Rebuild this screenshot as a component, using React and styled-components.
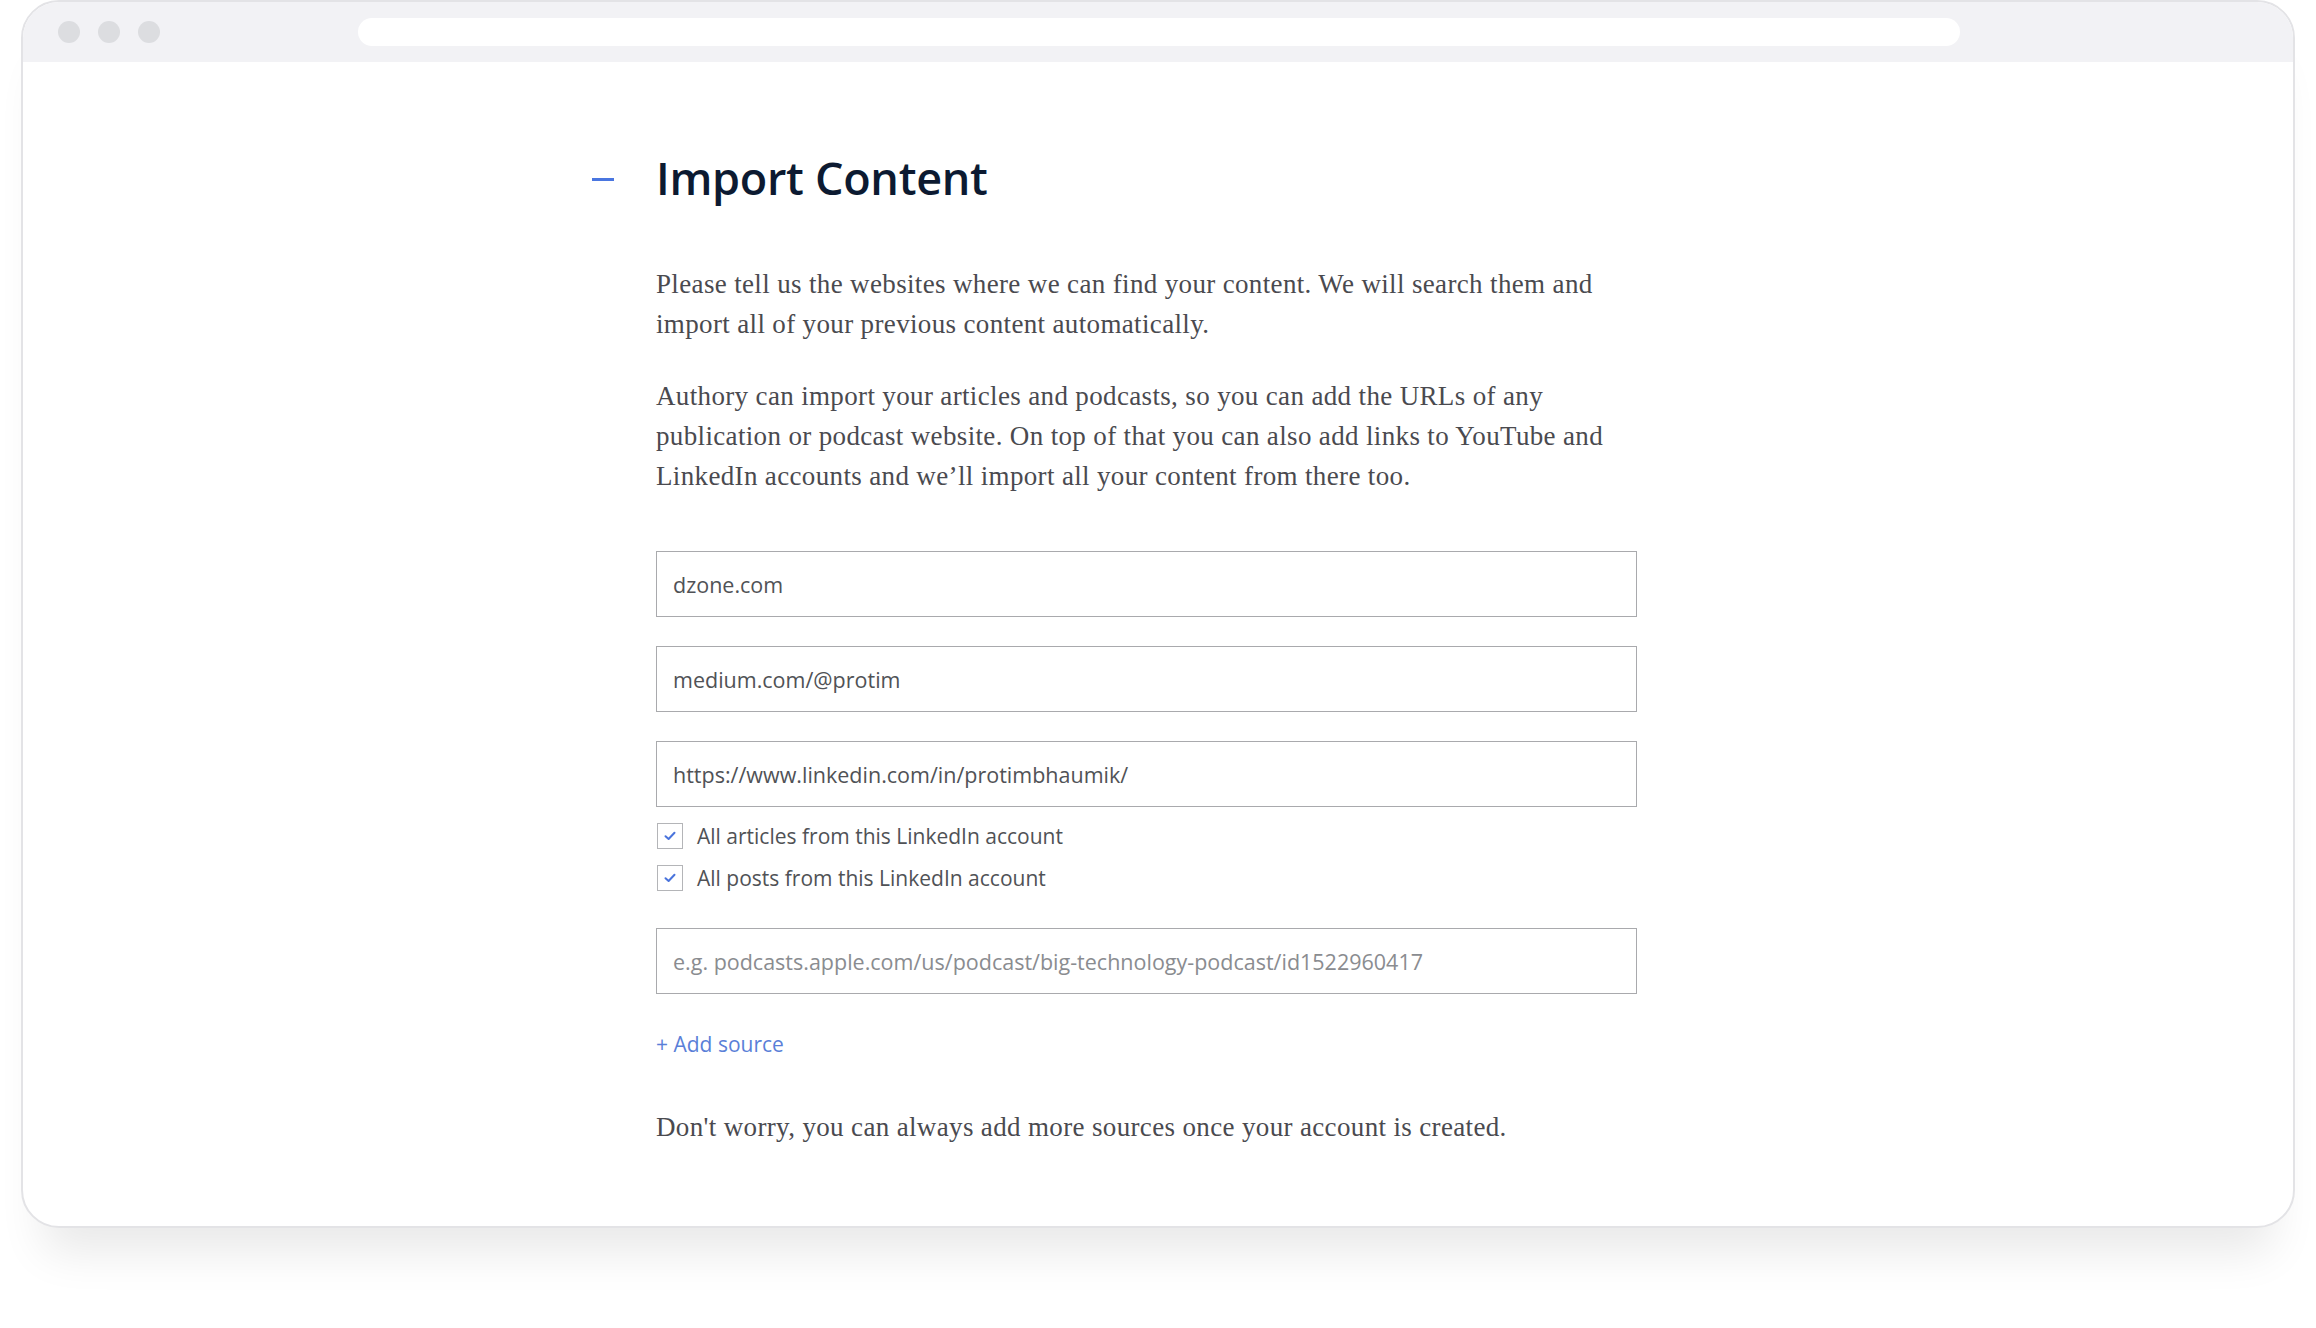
import styled, { createGlobalStyle } from "styled-components";

const GlobalStyle = createGlobalStyle`
  html, body {
    margin: 0;
    padding: 0;
    background: #ffffff;
  }
  * {
    box-sizing: border-box;
  }
`;

const sources = [
  { value: "dzone.com" },
  { value: "medium.com/@protim" },
  { value: "https://www.linkedin.com/in/protimbhaumik/", linkedin: true },
];

function Check() {
  return (
    <svg width="12" height="10" viewBox="0 0 12 10" fill="none">
      <path
        d="M1.5 5.2 L4.6 8 L10.5 1.8"
        stroke="#4a74dc"
        strokeWidth="2"
        strokeLinecap="round"
        strokeLinejoin="round"
      />
    </svg>
  );
}

export default function App() {
  return (
    <Page>
      <GlobalStyle />
      <Window>
        <TopBar>
          <Dots>
            <Dot />
            <Dot />
            <Dot />
          </Dots>
          <AddressBar />
        </TopBar>
        <Body>
          <Header>
            <Dash />
            <Title>Import Content</Title>
          </Header>
          <Content>
            <Paragraph>
              Please tell us the websites where we can find your content. We will search them and
              <br />
              import all of your previous content automatically.
            </Paragraph>
            <Paragraph>
              Authory can import your articles and podcasts, so you can add the URLs of any
              <br />
              publication or podcast website. On top of that you can also add links to YouTube and
              <br />
              LinkedIn accounts and we’ll import all your content from there too.
            </Paragraph>
            <Sources>
              {sources.map((s) => (
                <SourceGroup key={s.value}>
                  <Field readOnly value={s.value} />
                  {s.linkedin && (
                    <Options>
                      <Option>
                        <Box>
                          <Check />
                        </Box>
                        All articles from this LinkedIn account
                      </Option>
                      <Option>
                        <Box>
                          <Check />
                        </Box>
                        All posts from this LinkedIn account
                      </Option>
                    </Options>
                  )}
                </SourceGroup>
              ))}
              <SourceGroup>
                <Field
                  readOnly
                  placeholder="e.g. podcasts.apple.com/us/podcast/big-technology-podcast/id1522960417"
                />
              </SourceGroup>
            </Sources>
            <AddSource>+ Add source</AddSource>
            <Note>
              Don't worry, you can always add more sources once your account is created.
            </Note>
          </Content>
        </Body>
      </Window>
    </Page>
  );
}

const Page = styled.div`
  width: 2316px;
  height: 1328px;
  padding: 0 21px 0 21px;
`;

const Window = styled.div`
  width: 2274px;
  height: 1228px;
  border: 2px solid #e3e3e6;
  border-radius: 38px;
  background: #ffffff;
  overflow: hidden;
  display: flex;
  flex-direction: column;
  box-shadow: 0 46px 46px -22px rgba(0, 0, 0, 0.09);
`;

const TopBar = styled.div`
  height: 60px;
  flex-shrink: 0;
  background: #f2f2f5;
  display: flex;
  align-items: center;
  padding-left: 35px;
`;

const Dots = styled.div`
  display: flex;
  gap: 18px;
`;

const Dot = styled.span`
  width: 22px;
  height: 22px;
  border-radius: 50%;
  background: #dcdde0;
`;

const AddressBar = styled.div`
  margin-left: 198px;
  width: 1602px;
  height: 28px;
  border-radius: 14px;
  background: #ffffff;
`;

const Body = styled.div`
  padding: 89px 0 0 569px;
`;

const Header = styled.div`
  display: flex;
  align-items: center;
  gap: 42px;
`;

const Dash = styled.span`
  width: 22px;
  height: 3px;
  background: #4a76e0;
  margin-top: 4px;
`;

const Title = styled.h1`
  margin: 0;
  font-family: "Open Sans", sans-serif;
  font-weight: 600;
  font-size: 45px;
  line-height: 53px;
  color: #0c1a31;
  letter-spacing: -0.3px;
`;

const Content = styled.div`
  width: 981px;
  margin-left: 64px;
  padding-top: 60px;
`;

const Paragraph = styled.p`
  margin: 0 0 32px;
  font-family: "Liberation Serif", "Times New Roman", serif;
  font-size: 27px;
  letter-spacing: 0.35px;
  line-height: 40px;
  color: #4a4a4f;
  white-space: nowrap;
`;

const Sources = styled.div`
  display: flex;
  flex-direction: column;
  gap: 29px;
  margin-top: 55px;
`;

const SourceGroup = styled.div`
  display: flex;
  flex-direction: column;
`;

const Field = styled.input`
  width: 100%;
  height: 66px;
  border: 1.5px solid #a9aaad;
  border-radius: 0;
  padding: 0 16px;
  font-family: "Open Sans", sans-serif;
  font-size: 21.5px;
  color: #505256;
  background: #ffffff;
  outline: none;

  &::placeholder {
    color: #8a8c90;
  }
`;

const Options = styled.div`
  display: flex;
  flex-direction: column;
  padding-top: 8px;
`;

const Option = styled.label`
  height: 42px;
  display: flex;
  align-items: center;
  gap: 14px;
  font-family: "Open Sans", sans-serif;
  font-size: 21px;
  color: #505256;
`;

const Box = styled.span`
  width: 26px;
  height: 26px;
  border: 1.5px solid #b4b5b8;
  display: flex;
  align-items: center;
  justify-content: center;
  background: #ffffff;
  margin-left: 1px;
`;

const AddSource = styled.div`
  margin-top: 35px;
  font-family: "Open Sans", sans-serif;
  font-size: 21px;
  line-height: 30px;
  color: #5a7fd8;
  cursor: pointer;
`;

const Note = styled.p`
  margin: 48px 0 0;
  font-family: "Liberation Serif", "Times New Roman", serif;
  font-size: 27px;
  letter-spacing: 0.35px;
  line-height: 40px;
  color: #4a4a4f;
`;
